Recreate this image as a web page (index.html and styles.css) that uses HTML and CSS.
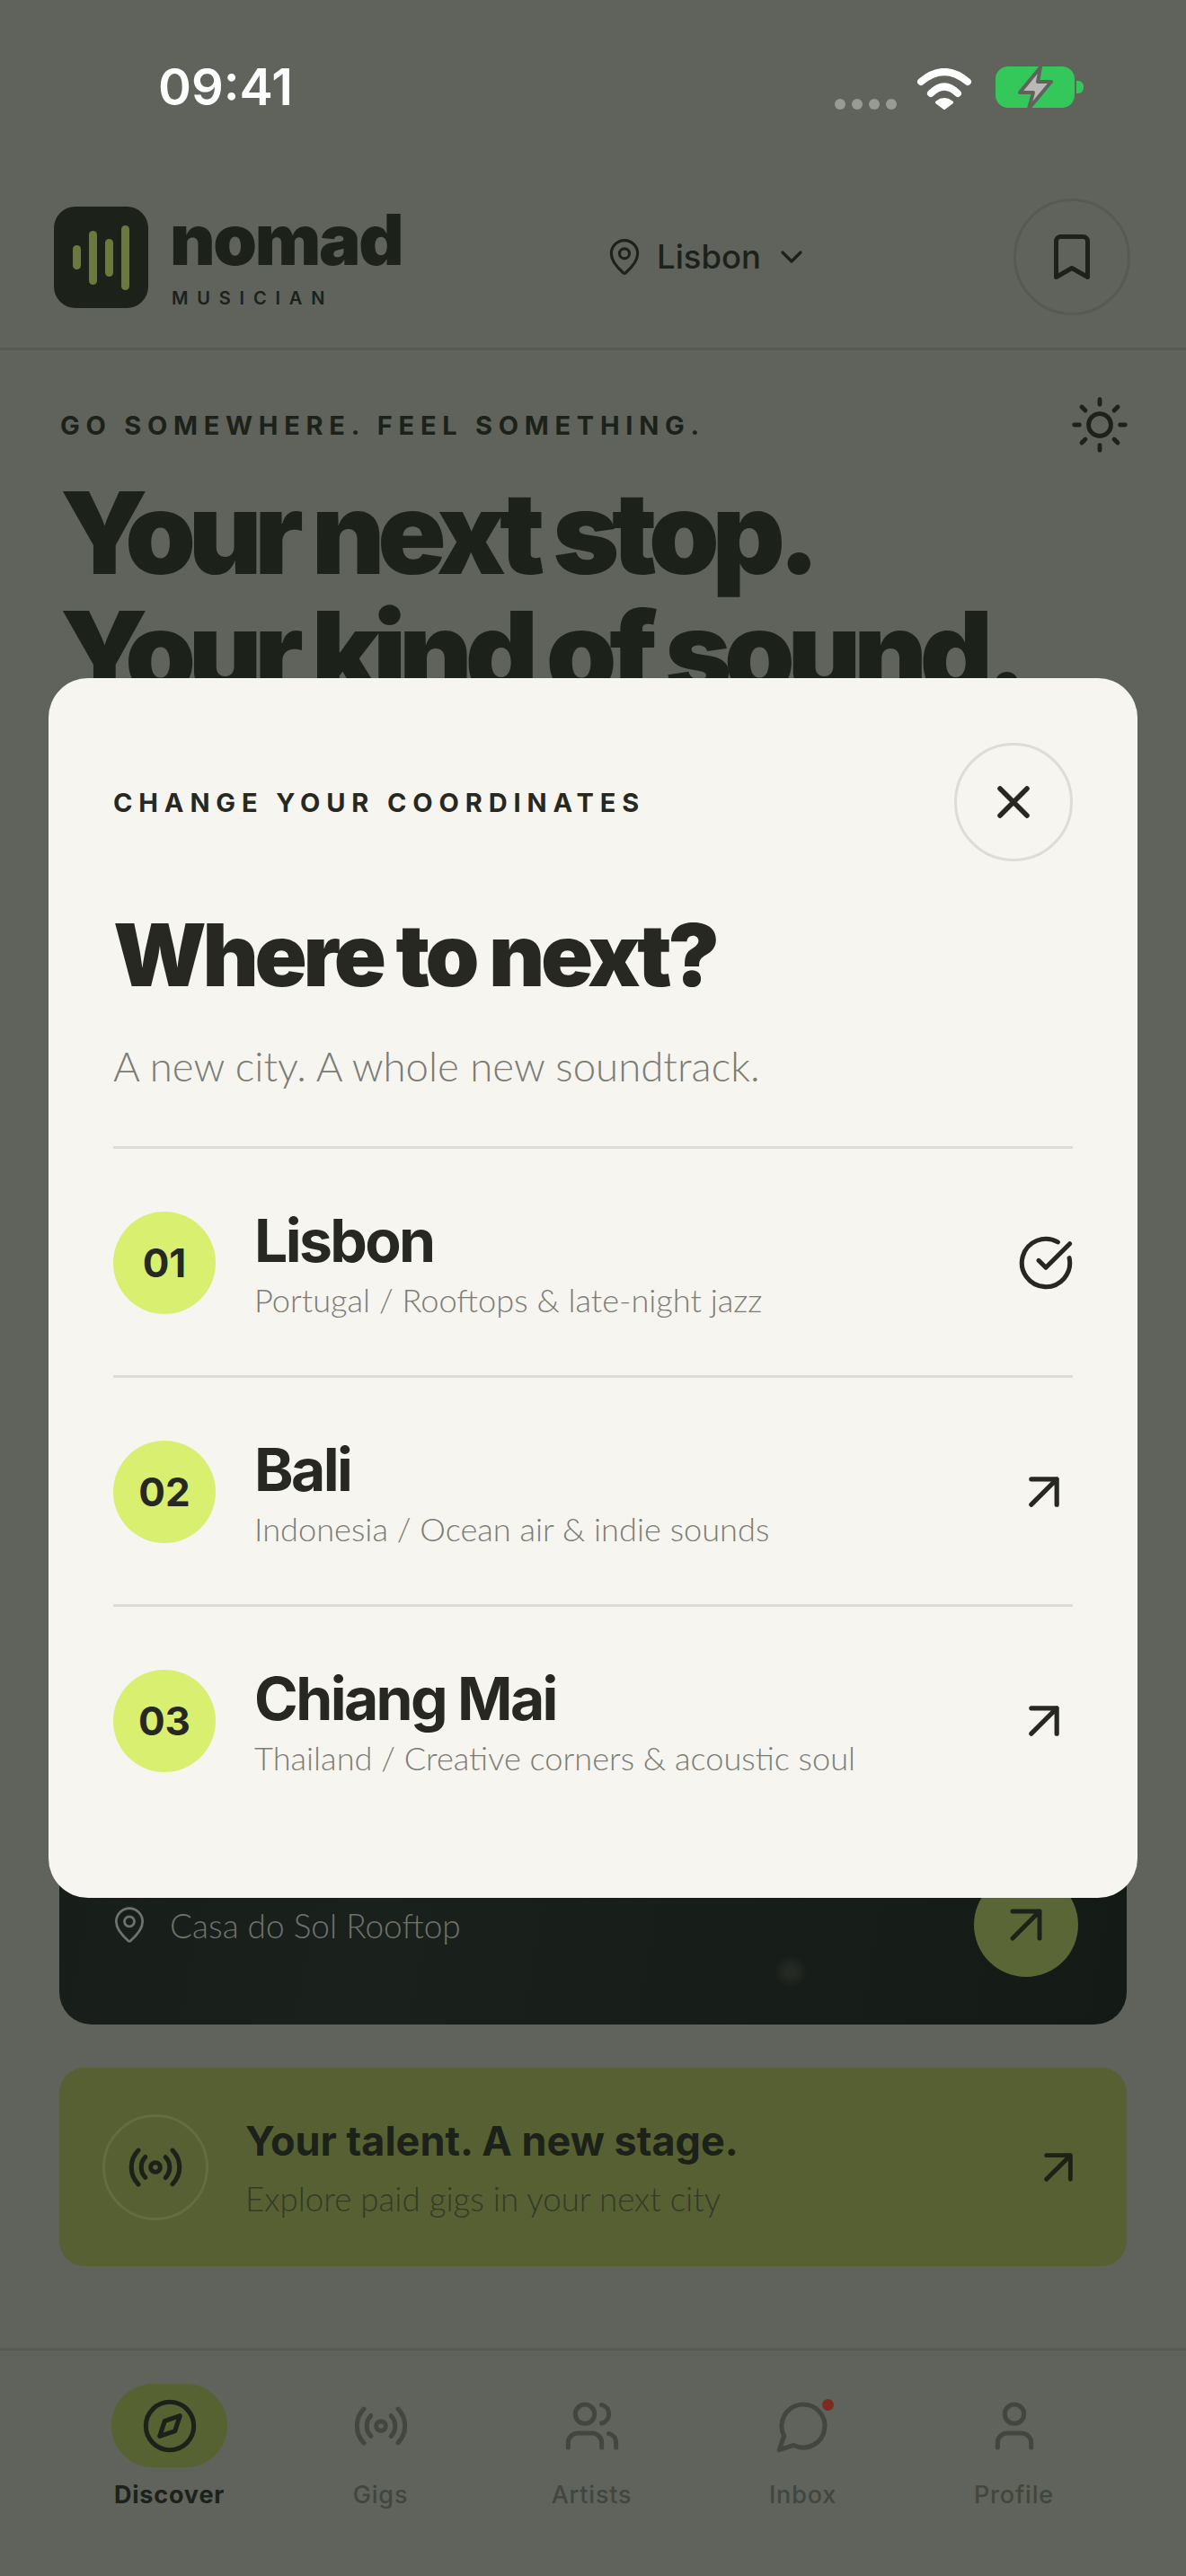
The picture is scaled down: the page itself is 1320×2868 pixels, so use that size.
FILE: index.html
```html
<!DOCTYPE html>
<html lang="en">
<head>
  <meta charset="UTF-8" />
  <meta name="viewport" content="width=device-width, initial-scale=1.0"/>
  <title>Nomad Musician</title>
  <link rel="stylesheet" href="styles.css">
</head>
<body>
  <div class="screen">

    <div class="status">
      <span class="time">09:41</span>
      <div class="status-icons">
        <div class="dots"><i></i><i></i><i></i><i></i></div>
        <svg class="wifi" width="62" height="46" viewBox="0 0 62 46" fill="none" stroke="#fff" stroke-linecap="round" stroke-linejoin="round">
          <path d="M5 15Q31-7 57 15" stroke-width="8"/>
          <path d="M16 28Q31 13 46 28" stroke-width="8"/>
          <path d="M23 38Q31 32 39 38L31 44Z" fill="#fff" stroke-width="4"/>
        </svg>
        <svg class="battery" width="98" height="48" viewBox="0 0 98 48">
          <rect x="0" y="0" width="88" height="46" rx="14" fill="#34c759"/>
          <path d="M90 16h2a6 6 0 0 1 6 6v2a6 6 0 0 1-6 6h-2z" fill="#34c759"/>
          <path d="M50 1 27 29h15l-5 18 25-30H47z" fill="#b9bab7" stroke="#5f635c" stroke-width="4" stroke-linejoin="round"/>
        </svg>
      </div>
    </div>

    <header class="header">
      <div class="brand">
        <div class="logo">
          <i class="bar b1"></i><i class="bar b2"></i><i class="bar b3"></i><i class="bar b4"></i>
        </div>
        <div class="brand-text">
          <div class="wordmark">nomad</div>
          <div class="tagline">MUSICIAN</div>
        </div>
      </div>
      <div class="city">
        <svg class="ico" width="44" height="44" viewBox="0 0 24 24" stroke-width="1.7"><path d="M20 10c0 4.993-5.539 10.193-7.399 11.799a1 1 0 0 1-1.202 0C9.539 20.193 4 14.993 4 10a8 8 0 0 1 16 0"/><circle cx="12" cy="10" r="3"/></svg>
        <span>Lisbon</span>
        <svg class="ico" width="40" height="40" viewBox="0 0 24 24" stroke-width="2"><path d="m6 9 6 6 6-6"/></svg>
      </div>
      <div class="save">
        <svg class="ico" width="60" height="60" viewBox="0 0 24 24" stroke-width="2"><path d="m19 21-7-4-7 4V5a2 2 0 0 1 2-2h10a2 2 0 0 1 2 2v16z"/></svg>
      </div>
    </header>

    <section class="hero">
      <div class="hero-top">
        <span class="eyebrow">GO SOMEWHERE. FEEL SOMETHING.</span>
        <svg class="ico sun" width="68" height="68" viewBox="0 0 24 24" stroke-width="1.7"><circle cx="12" cy="12" r="4.4"/><path d="M12 2v2M12 20v2M4.93 4.93l1.41 1.41M17.66 17.66l1.41 1.41M2 12h2M20 12h2M6.34 17.66l-1.41 1.41M19.07 4.93l-1.41 1.41"/></svg>
      </div>
      <h1>Your next stop.<br>Your kind of sound.</h1>
    </section>

    <div class="event-card">
      <div class="event-row">
        <div class="venue">
          <svg class="ico" width="44" height="44" viewBox="0 0 24 24" stroke-width="1.5"><path d="M20 10c0 4.993-5.539 10.193-7.399 11.799a1 1 0 0 1-1.202 0C9.539 20.193 4 14.993 4 10a8 8 0 0 1 16 0"/><circle cx="12" cy="10" r="3"/></svg>
          <span>Casa do Sol Rooftop</span>
        </div>
        <div class="event-go">
          <svg class="ico" width="36" height="36" viewBox="0 0 36 36" stroke-width="5"><path d="M3 3h30v30M3 33 33 3"/></svg>
        </div>
      </div>
    </div>

    <div class="gig-banner">
      <div class="gig-icon">
        <svg class="ico" width="64" height="64" viewBox="0 0 24 24" stroke-width="1.9"><path d="M4.9 19.1C1 15.2 1 8.8 4.9 4.9M7.8 16.2c-2.3-2.3-2.3-6.1 0-8.5M16.2 7.8c2.3 2.3 2.3 6.1 0 8.5M19.1 4.9C23 8.8 23 15.1 19.1 19"/><circle cx="12" cy="12" r="2"/></svg>
      </div>
      <div class="gig-text">
        <div class="gig-title">Your talent. A new stage.</div>
        <div class="gig-sub">Explore paid gigs in your next city</div>
      </div>
      <svg class="ico gig-arrow" width="32" height="32" viewBox="0 0 36 36" stroke-width="5.5"><path d="M3 3h30v30M3 33 33 3"/></svg>
    </div>

    <nav class="tabs">
      <div class="tab active">
        <div class="tab-icon">
          <svg class="ico" width="64" height="64" viewBox="0 0 24 24" stroke-width="1.9"><circle cx="12" cy="12" r="10"/><path d="m16.24 7.76-2.12 6.36-6.36 2.12 2.12-6.36z"/></svg>
        </div>
        <span>Discover</span>
      </div>
      <div class="tab">
        <div class="tab-icon">
          <svg class="ico" width="64" height="64" viewBox="0 0 24 24" stroke-width="1.9"><path d="M4.9 19.1C1 15.2 1 8.8 4.9 4.9M7.8 16.2c-2.3-2.3-2.3-6.1 0-8.5M16.2 7.8c2.3 2.3 2.3 6.1 0 8.5M19.1 4.9C23 8.8 23 15.1 19.1 19"/><circle cx="12" cy="12" r="2"/></svg>
        </div>
        <span>Gigs</span>
      </div>
      <div class="tab">
        <div class="tab-icon">
          <svg class="ico" width="64" height="64" viewBox="0 0 24 24" stroke-width="1.9"><path d="M16 21v-2a4 4 0 0 0-4-4H6a4 4 0 0 0-4 4v2M16 3.128a4 4 0 0 1 0 7.744M22 21v-2a4 4 0 0 0-3-3.87"/><circle cx="9" cy="7" r="4"/></svg>
        </div>
        <span>Artists</span>
      </div>
      <div class="tab">
        <div class="tab-icon">
          <svg class="ico" width="64" height="64" viewBox="0 0 24 24" stroke-width="1.9"><path d="M7.9 20A9 9 0 1 0 4 16.1L2 22Z"/></svg>
          <i class="unread"></i>
        </div>
        <span>Inbox</span>
      </div>
      <div class="tab">
        <div class="tab-icon">
          <svg class="ico" width="64" height="64" viewBox="0 0 24 24" stroke-width="1.9"><path d="M19 21v-2a4 4 0 0 0-4-4H9a4 4 0 0 0-4 4v2"/><circle cx="12" cy="7" r="4"/></svg>
        </div>
        <span>Profile</span>
      </div>
    </nav>

    <div class="modal">
      <div class="modal-top">
        <span class="modal-eyebrow">CHANGE YOUR COORDINATES</span>
        <div class="close">
          <svg class="ico" width="36" height="36" viewBox="0 0 36 36" stroke-width="5.5"><path d="M3 3l30 30M33 3 3 33"/></svg>
        </div>
      </div>
      <h2>Where to next?</h2>
      <p class="modal-sub">A new city. A whole new soundtrack.</p>

      <div class="city-row">
        <div class="num">01</div>
        <div class="city-text">
          <div class="city-name">Lisbon</div>
          <div class="city-desc">Portugal / Rooftops &amp; late-night jazz</div>
        </div>
        <svg class="ico row-check" width="64" height="64" viewBox="0 0 24 24" stroke-width="1.9"><path d="M21.801 10A10 10 0 1 1 17 3.335"/><path d="m9 11 3 3L22 4"/></svg>
      </div>
      <div class="city-row">
        <div class="num">02</div>
        <div class="city-text">
          <div class="city-name">Bali</div>
          <div class="city-desc">Indonesia / Ocean air &amp; indie sounds</div>
        </div>
        <svg class="ico row-arrow" width="34" height="34" viewBox="0 0 36 36" stroke-width="5.5"><path d="M3 3h30v30M3 33 33 3"/></svg>
      </div>
      <div class="city-row">
        <div class="num">03</div>
        <div class="city-text">
          <div class="city-name">Chiang Mai</div>
          <div class="city-desc">Thailand / Creative corners &amp; acoustic soul</div>
        </div>
        <svg class="ico row-arrow" width="34" height="34" viewBox="0 0 36 36" stroke-width="5.5"><path d="M3 3h30v30M3 33 33 3"/></svg>
      </div>
    </div>

  </div>
</body>
</html>
```

FILE: styles.css
```css
* {
  box-sizing: border-box;
  margin: 0;
  padding: 0;
}

body {
  background: #5f635c;
  font-family: 'Inter', sans-serif;
  color: #1c211a;
}

.screen {
  position: relative;
  width: 1320px;
  height: 2868px;
  overflow: hidden;
  background: #5f635c;
}

.ico {
  flex: none;
  fill: none;
  stroke: currentColor;
  stroke-linecap: round;
  stroke-linejoin: round;
}

/* status bar */
.status {
  height: 190px;
  display: flex;
  justify-content: space-between;
  padding: 63px 114px 0 176px;
}

.time {
  font-size: 56px;
  line-height: 68px;
  font-weight: 600;
  color: #fff;
}

.status-icons {
  display: flex;
  align-items: flex-end;
  height: 48px;
  margin-top: 11px;
}

.dots {
  display: flex;
  gap: 7px;
  margin-right: 22px;
}

.dots i {
  width: 12px;
  height: 12px;
  border-radius: 50%;
  background: #989a95;
}

.wifi {
  margin-right: 26px;
}

/* header */
.header {
  height: 200px;
  padding: 31px 62px 0 60px;
  border-bottom: 3px solid #565a53;
  display: flex;
  align-items: flex-start;
}

.brand {
  display: flex;
  gap: 27px;
  width: 613px;
  margin-top: 9px;
}

.logo {
  width: 105px;
  height: 113px;
  background: #1c211a;
  border-radius: 24px;
  display: flex;
  align-items: center;
  justify-content: center;
  gap: 9px;
}

.bar {
  width: 9px;
  border-radius: 5px;
  background: #6b7a3c;
}

.b1 { height: 27px; }
.b2 { height: 60px; }
.b3 { height: 42px; }
.b4 { height: 72px; }

.wordmark {
  font-size: 78px;
  line-height: 74px;
  font-weight: 900;
  letter-spacing: -0.03em;
  margin-left: -3px;
}

.tagline {
  font-size: 20px;
  line-height: 24px;
  font-weight: 600;
  letter-spacing: 0.49em;
  margin-top: 16px;
  margin-left: -1px;
}

.city {
  display: flex;
  align-items: center;
  height: 130px;
  font-size: 36.5px;
  font-weight: 500;
  gap: 14px;
  margin-right: auto;
}

.save {
  width: 130px;
  height: 130px;
  border: 3px solid #565a53;
  border-radius: 50%;
  display: flex;
  align-items: center;
  justify-content: center;
}

/* hero */
.hero {
  padding: 53px 67px 0;
}

.hero-top {
  display: flex;
  justify-content: space-between;
  align-items: center;
  height: 60px;
}

.sun {
  margin-right: -5px;
}

.eyebrow {
  font-size: 29px;
  font-weight: 700;
  letter-spacing: 0.232em;
}

.hero h1 {
  margin-top: 24px;
  font-size: 126px;
  line-height: 133px;
  font-weight: 900;
  letter-spacing: -0.065em;
  white-space: nowrap;
}

/* card behind the modal */
.event-card {
  margin: 40px 66px 0;
  height: 1421px;
  border-radius: 36px;
  background:
    radial-gradient(circle at 814px 1362px, #242924 0, #242924 6px, transparent 18px),
    linear-gradient(100deg, #161c17, #1a201b 40%, #141a15);
  display: flex;
  flex-direction: column;
  justify-content: flex-end;
  padding: 0 54px 53px 56px;
}

.event-row {
  display: flex;
  justify-content: space-between;
  align-items: center;
}

.venue {
  display: flex;
  align-items: center;
  gap: 23px;
  color: #6f736d;
  font-family: 'Lato', sans-serif;
  font-weight: 300;
  font-size: 37px;
}

.event-go {
  width: 116px;
  height: 116px;
  border-radius: 50%;
  background: #5a6636;
  display: flex;
  align-items: center;
  justify-content: center;
}

/* gigs banner */
.gig-banner {
  margin: 48px 66px 0;
  height: 221px;
  border-radius: 28px;
  background: #566033;
  display: flex;
  align-items: center;
  padding: 0 60px 0 48px;
}

.gig-icon {
  width: 118px;
  height: 118px;
  border: 3px solid #626d40;
  border-radius: 50%;
  display: flex;
  align-items: center;
  justify-content: center;
}

.gig-text {
  flex: 1;
  margin-left: 41px;
}

.gig-title {
  font-size: 45px;
  line-height: 56px;
  font-weight: 700;
}

.gig-sub {
  margin-top: 14px;
  font-family: 'Lato', sans-serif;
  font-weight: 300;
  font-size: 36.7px;
  line-height: 44px;
  color: #343a28;
}

/* bottom tabs */
.tabs {
  margin-top: 91px;
  border-top: 3px solid #565a53;
  padding: 37px 71px 0;
  display: grid;
  grid-template-columns: repeat(5, 235px);
}

.tab {
  display: flex;
  flex-direction: column;
  align-items: center;
  font-size: 27px;
  font-weight: 500;
  letter-spacing: 0.03em;
  color: #41463f;
}

.tab-icon {
  position: relative;
  width: 129px;
  height: 93px;
  border-radius: 46px;
  display: flex;
  align-items: center;
  justify-content: center;
  margin-bottom: 14px;
}

.tab.active {
  color: #1c211a;
  font-weight: 700;
}

.tab.active .tab-icon {
  background: #576233;
}

.unread {
  position: absolute;
  top: 17px;
  right: 30px;
  width: 13px;
  height: 13px;
  border-radius: 50%;
  background: #7b2c1e;
}

/* modal */
.modal {
  position: absolute;
  left: 54px;
  top: 755px;
  width: 1212px;
  height: 1358px;
  border-radius: 44px;
  background: #f6f5f0;
  color: #272822;
  padding: 72px 72px 0;
}

.modal-top {
  display: flex;
  justify-content: space-between;
  align-items: center;
}

.modal-eyebrow {
  font-size: 29px;
  font-weight: 700;
  letter-spacing: 0.237em;
}

.close {
  width: 132px;
  height: 132px;
  border: 3px solid #dedcd6;
  border-radius: 50%;
  display: flex;
  align-items: center;
  justify-content: center;
}

.modal h2 {
  margin-top: 46px;
  font-size: 96px;
  line-height: 116px;
  font-weight: 900;
  letter-spacing: -0.045em;
}

.modal-sub {
  margin-top: 38px;
  padding-bottom: 61px;
  font-family: 'Lato', sans-serif;
  font-weight: 300;
  font-size: 45.6px;
  line-height: 56px;
  color: #7c7c75;
}

.city-row {
  height: 255px;
  padding-top: 2px;
  border-top: 3px solid #dedcd6;
  display: flex;
  align-items: center;
}

.num {
  width: 114px;
  height: 114px;
  border-radius: 50%;
  background: #d8ef70;
  font-size: 44px;
  font-weight: 700;
  display: flex;
  align-items: center;
  justify-content: center;
}

.city-text {
  flex: 1;
  margin-left: 43px;
}

.city-name {
  font-size: 66px;
  line-height: 76px;
  font-weight: 700;
  letter-spacing: -0.04em;
}

.city-desc {
  margin-top: 6px;
  font-family: 'Lato', sans-serif;
  font-weight: 300;
  font-size: 36.2px;
  line-height: 44px;
  color: #7c7c75;
}

.row-check {
  margin-right: -2px;
}

.row-arrow {
  margin-right: 15px;
}
```
